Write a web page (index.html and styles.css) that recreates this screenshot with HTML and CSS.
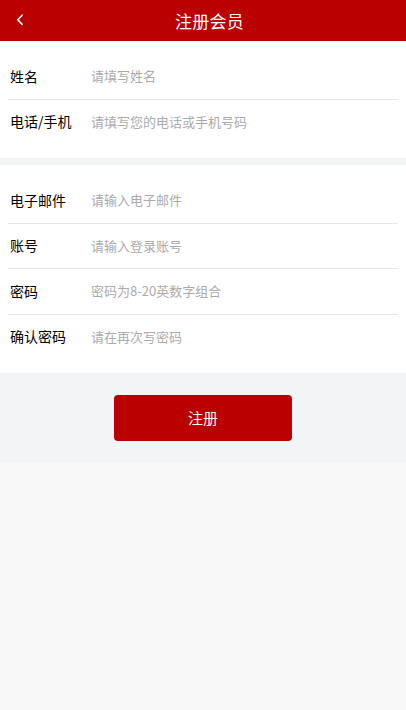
FILE: index.html
```html
<!DOCTYPE html>
<html lang="zh-CN">
<head>
<meta charset="utf-8">
<title>注册会员</title>
<link rel="stylesheet" href="styles.css">
</head>
<body>
<div class="page">
  <header class="topbar">
    <a class="back" href="#" aria-label="返回">
      <svg width="8" height="12" viewBox="0 0 8 12"><path d="M6.2 1.2 L1.8 5.8 L6.2 10.4" fill="none" stroke="#fff" stroke-width="1.6" stroke-linecap="round" stroke-linejoin="round"/></svg>
    </a>
    <h1 class="title">注册会员</h1>
    <span class="spacer"></span>
  </header>

  <main class="content">
    <section class="group">
      <label class="row"><span class="label">姓名</span><input class="field" type="text" placeholder="请填写姓名"></label>
      <label class="row"><span class="label">电话/手机</span><input class="field" type="text" placeholder="请填写您的电话或手机号码"></label>
    </section>

    <section class="group">
      <label class="row"><span class="label">电子邮件</span><input class="field" type="text" placeholder="请输入电子邮件"></label>
      <label class="row"><span class="label">账号</span><input class="field" type="text" placeholder="请输入登录账号"></label>
      <label class="row"><span class="label">密码</span><input class="field" type="password" placeholder="密码为8-20英数字组合"></label>
      <label class="row"><span class="label">确认密码</span><input class="field" type="password" placeholder="请在再次写密码"></label>
    </section>

    <div class="actions">
      <button class="submit" type="button">注册</button>
    </div>
  </main>
</div>
</body>
</html>
```

FILE: styles.css
```css
* { box-sizing: border-box; }

html, body {
  margin: 0;
  padding: 0;
}

body {
  background: #f8f8f8;
  font-family: "Noto Sans CJK SC", "Noto Sans", sans-serif;
  color: #000;
  min-height: 710px;
}

.page {
  width: 406px;
}

.topbar {
  height: 41px;
  background: #bb0000;
  display: flex;
  align-items: center;
}

.back {
  width: 40px;
  height: 41px;
  display: flex;
  align-items: center;
  padding-left: 16px;
  padding-bottom: 1px;
}

.back svg { display: block; }

.title {
  flex: 1;
  margin: 0;
  text-align: center;
  color: #fff;
  font-size: 17px;
  font-weight: 400;
  line-height: 41px;
  letter-spacing: 0.3px;
}

.spacer {
  width: 27px;
}

.content {
  background: #f3f4f6;
  display: flex;
  flex-direction: column;
  gap: 7px;
}

.group {
  background: #fff;
  padding: 13px 8px;
}

.row {
  display: flex;
  align-items: center;
  height: 45.5px;
  padding-bottom: 1px;
  border-bottom: 1px solid #e6e6e6;
}

.row:last-child {
  border-bottom-color: transparent;
}

.label {
  width: 83px;
  padding-left: 2px;
  font-size: 14px;
  font-weight: 400;
  color: #000;
  white-space: nowrap;
}

.field {
  flex: 1;
  min-width: 0;
  border: none;
  outline: none;
  background: transparent;
  padding: 0;
  font-family: "Noto Sans CJK SC", "Noto Sans", sans-serif;
  font-size: 13px;
  color: #333;
}

.field::placeholder {
  color: #ababab;
}

.actions {
  display: flex;
  justify-content: center;
  padding: 22px 0 22px;
  margin-top: -7px;
}

.submit {
  width: 178px;
  height: 46px;
  border: none;
  border-radius: 4px;
  background: #bb0000;
  color: #fff;
  font-family: "Noto Sans CJK SC", "Noto Sans", sans-serif;
  font-size: 15px;
  padding: 0 0 2px;
}
```
